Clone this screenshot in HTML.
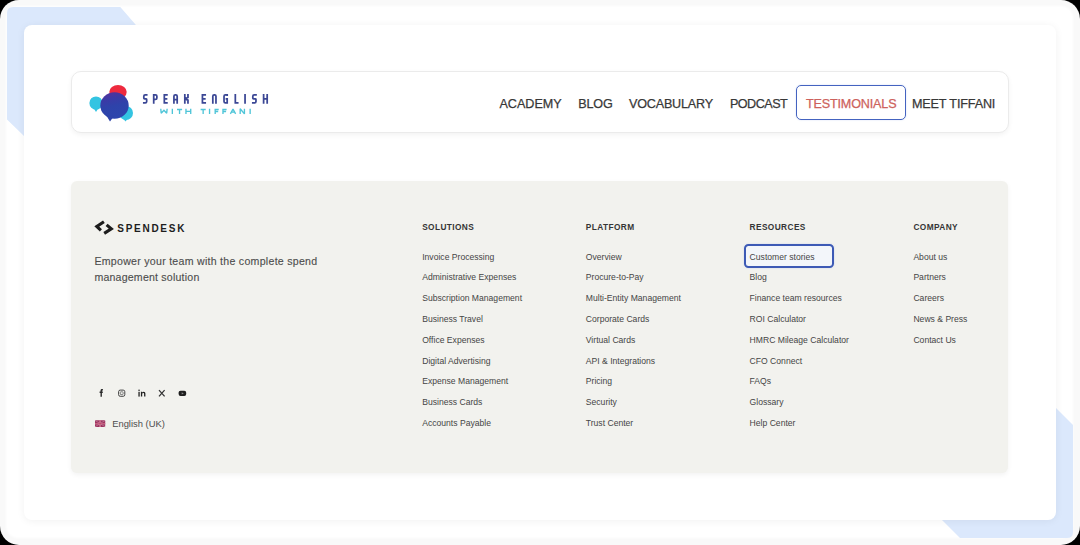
<!DOCTYPE html>
<html><head><meta charset="utf-8">
<style>
*{margin:0;padding:0;box-sizing:border-box}
html,body{width:1080px;height:545px;background:#000;overflow:hidden}
body{position:relative;font-family:"Liberation Sans",sans-serif}
.frame{position:absolute;left:0;top:0;width:1080px;height:545px;border-radius:19px;background:#f9f9f9;overflow:hidden}
.inner{position:absolute;left:6px;top:6px;width:1067px;height:532px;border-radius:12px;background:#fff;filter:blur(1px)}
.abs{position:absolute}
svg.deco{position:absolute;left:0;top:0}
.card{position:absolute;left:24px;top:25px;width:1032px;height:495px;border-radius:8px;background:#fff;box-shadow:0 1px 9px rgba(0,0,0,.06)}
.nav{position:absolute;left:71px;top:71.2px;width:938px;height:61.8px;border-radius:10px;background:#fff;border:1px solid #ebebeb;box-shadow:0 2px 5px rgba(0,0,0,.05)}
.tbox{position:absolute;left:796px;top:85.4px;width:110.2px;height:34.4px;border:1.7px solid #4463c0;border-radius:5px;box-shadow:0 0 1.5px rgba(90,130,220,.35)}
.cbox{position:absolute;left:744.4px;top:244.4px;width:89.6px;height:23.7px;border:2px solid #3d5ab5;border-radius:4.5px;background:#f3f6fa;box-shadow:0 0 1.5px rgba(90,130,220,.35)}
.foot{position:absolute;left:71px;top:180.5px;width:937px;height:292.7px;border-radius:6px;background:#f2f2ee;box-shadow:0 2px 5px rgba(0,0,0,.05)}
.t{position:absolute;white-space:nowrap}
</style></head><body>
<div class="frame">
  <div class="inner"></div>
  <svg class="deco" width="1080" height="545">
    <path d="M7 13 Q7 7 13 7 L120.3 7 L136.8 26 L136.8 40 L40 40 L40 136 L24 136 L7 119.5 Z" fill="#dbe8fc"/>
    <path d="M1073 532 Q1073 538 1067 538 L960 538 L942 520 L1040 520 L1040 408 L1056 408 L1073 425 Z" fill="#dbe8fc"/>
  </svg>
  <div class="card"></div>
  <div class="nav"></div>
  <div class="tbox"></div>
  <div class="foot"></div>
  <div class="cbox"></div>
<svg class="abs" style="left:80px;top:76px" width="60" height="52" viewBox="80 76 60 52">
<defs><linearGradient id="mbg" x1="0" y1="0" x2="0.25" y2="1"><stop offset="0" stop-color="#5b2f98"/><stop offset=".32" stop-color="#3b3aa6"/><stop offset=".6" stop-color="#2e43aa"/><stop offset="1" stop-color="#2d45ad"/></linearGradient></defs>
<ellipse cx="118" cy="92" rx="8.7" ry="7" fill="#ee2a3e"/>
<circle cx="96" cy="103" r="6.6" fill="#33c4e2"/>
<path d="M93.5 108 L96 112 L98.5 108 Z" fill="#33c4e2"/>
<circle cx="126" cy="113" r="7" fill="#33c4e2"/>
<path d="M122 117 L125.5 121.5 L129 117 Z" fill="#33c4e2"/>
<ellipse cx="114.5" cy="105.5" rx="14.2" ry="13.2" fill="url(#mbg)"/>
<path d="M106 115 L110 121.5 L114 116 Z" fill="#2e43aa"/>
</svg>
<svg class="abs" style="left:0;top:0" width="300" height="130" viewBox="0 0 300 130">
<path d="M147.55 94.88 L145.22 94.88 Q143.82 94.88 143.82 96.28 L143.82 98.30 Q143.82 98.90 144.62 98.90 L145.88 98.90 Q146.67 98.90 146.67 99.50 L146.67 101.53 Q146.67 102.92 145.27 102.92 L142.95 102.92 M153.72 103.80 L153.72 94.88 L155.47 94.88 Q156.88 94.88 156.88 96.28 L156.88 97.99 Q156.88 99.39 155.47 99.39 L153.72 99.39 M167.75 94.88 L164.32 94.88 L164.32 102.92 L167.75 102.92 M164.32 98.90 L167.35 98.90 M173.93 103.80 L173.93 96.28 Q173.93 94.88 175.33 94.88 L175.78 94.88 Q177.18 94.88 177.18 96.28 L177.18 103.80 M173.93 99.68 L177.18 99.68 M184.82 94.00 L184.82 103.80 M187.97 94.00 L187.97 97.43 L184.82 98.90 L187.97 100.08 L187.97 103.80 M206.05 94.88 L202.43 94.88 L202.43 102.92 L206.05 102.92 M202.43 98.90 L205.65 98.90 M212.82 103.80 L212.82 96.28 Q212.82 94.88 214.22 94.88 L214.57 94.88 Q215.97 94.88 215.97 96.28 L215.97 103.80 M227.18 96.08 L227.18 94.88 L225.43 94.88 Q224.03 94.88 224.03 96.28 L224.03 101.53 Q224.03 102.92 225.43 102.92 L227.18 102.92 L227.18 98.90 L225.60 98.90 M235.32 94.00 L235.32 102.92 L238.55 102.92 M245.05 94.00 L245.05 103.80 M256.85 94.88 L254.22 94.88 Q252.82 94.88 252.82 96.28 L252.82 98.30 Q252.82 98.90 253.62 98.90 L255.17 98.90 Q255.97 98.90 255.97 99.50 L255.97 101.53 Q255.97 102.92 254.57 102.92 L251.95 102.92 M263.62 94.00 L263.62 103.80 M267.18 94.00 L267.18 103.80 M263.62 98.90 L267.18 98.90" fill="none" stroke="#3b4795" stroke-width="1.75" stroke-miterlimit="2" stroke-linejoin="miter" stroke-linecap="butt"/>
<path d="M160.78 108.80 L161.17 113.22 L163.95 110.33 L166.72 113.22 L167.12 108.80 M172.35 108.80 L172.35 113.90 M177.00 109.47 L182.10 109.47 M179.55 108.80 L179.55 113.90 M185.97 108.80 L185.97 113.90 M190.72 108.80 L190.72 113.90 M185.97 111.35 L190.72 111.35 M200.60 109.47 L205.70 109.47 M203.15 108.80 L203.15 113.90 M209.55 108.80 L209.55 113.90 M218.70 109.47 L215.18 109.47 L215.18 113.90 M215.18 111.45 L218.20 111.45 M226.60 109.47 L222.97 109.47 L222.97 113.90 M222.97 111.45 L226.10 111.45 M230.40 113.90 L233.00 109.00 L235.60 113.90 M231.60 112.17 L234.40 112.17 M240.18 113.90 L240.18 108.80 L244.43 113.90 L244.43 108.80 M250.15 108.80 L250.15 113.90" fill="none" stroke="#4fc5d8" stroke-width="1.35" stroke-miterlimit="2" stroke-linejoin="miter" stroke-linecap="butt"/>
</svg>

<svg class="abs" style="left:90px;top:216px" width="28" height="22" viewBox="90 216 28 22">
<polyline points="103.9,221.7 96.8,226.5 100.9,230.3" fill="none" stroke="#1d1d1d" stroke-width="3.1" stroke-linejoin="miter"/>
<polyline points="106.6,224.9 111.3,228.9 104.2,233.4" fill="none" stroke="#1d1d1d" stroke-width="3.1" stroke-linejoin="miter"/>
</svg>
<svg class="abs" style="left:92px;top:384px" width="100" height="18" viewBox="92 384 100 18">
<path d="M100.5 396.8 V393 H99.6 V391.6 H100.5 V390.7 C100.5 389.6 101 389.1 102 389.1 H102.9 V390.4 H102.4 C102 390.4 101.9 390.6 101.9 391 V391.6 H102.9 L102.7 393 H101.9 V396.8 Z" fill="#2a2a2a"/>
<rect x="118.6" y="390.1" width="6.2" height="6.2" rx="1.6" fill="none" stroke="#444" stroke-width="1"/>
<rect x="120.3" y="391.8" width="2.8" height="2.8" rx=".6" fill="none" stroke="#555" stroke-width=".7"/>
<rect x="138.4" y="391.8" width="1.3" height="4.8" fill="#222"/><circle cx="139.05" cy="390.3" r=".8" fill="#222"/>
<path d="M140.9 391.8 H142.1 V392.5 C142.5 392 143 391.7 143.7 391.7 C144.9 391.7 145.4 392.4 145.4 393.7 V396.6 H144.1 V394 C144.1 393.3 143.9 392.9 143.4 392.9 C142.7 392.9 142.2 393.4 142.2 394.2 V396.6 H140.9 Z" fill="#222"/>
<path d="M159 390.2 L164.6 396.4 M164.6 390.2 L159 396.4" stroke="#333" stroke-width="1.25"/>
<rect x="178.6" y="390.8" width="7.6" height="5.2" rx="1.9" fill="#1e1e1e"/>
<path d="M181.7 392.2 L183.8 393.4 L181.7 394.6 Z" fill="#888"/>
</svg>
<svg class="abs" style="left:95px;top:420px" width="11" height="8" viewBox="0 0 11 8">
<rect x="0" y="0.2" width="10.2" height="6.8" rx="1" fill="#9e3460"/>
<path d="M0 0.4 L10.2 6.8 M10.2 0.4 L0 6.8" stroke="#c07894" stroke-width=".8"/>
<path d="M5.1 0.2 V7 M0 3.6 H10.2" stroke="#dcaabb" stroke-width="1.4"/>
<path d="M5.1 0.2 V7 M0 3.6 H10.2" stroke="#b8345a" stroke-width=".7"/>
</svg>
<div class="t" style="left:499.4px;top:97.06px;font-size:12.6px;line-height:15.75px;font-weight:400;color:#383838;letter-spacing:0px;-webkit-text-stroke:0.25px #383838">ACADEMY</div>
<div class="t" style="left:578.3px;top:97.06px;font-size:12.6px;line-height:15.75px;font-weight:400;color:#383838;letter-spacing:-0.2px;-webkit-text-stroke:0.25px #383838">BLOG</div>
<div class="t" style="left:629.0px;top:97.06px;font-size:12.6px;line-height:15.75px;font-weight:400;color:#383838;letter-spacing:-0.2px;-webkit-text-stroke:0.25px #383838">VOCABULARY</div>
<div class="t" style="left:729.9px;top:97.06px;font-size:12.6px;line-height:15.75px;font-weight:400;color:#383838;letter-spacing:-0.5px;-webkit-text-stroke:0.25px #383838">PODCAST</div>
<div class="t" style="left:805.9px;top:97.06px;font-size:12.6px;line-height:15.75px;font-weight:400;color:#cd625c;letter-spacing:-0.15px;-webkit-text-stroke:0.25px #cd625c">TESTIMONIALS</div>
<div class="t" style="left:912.0px;top:97.06px;font-size:12.6px;line-height:15.75px;font-weight:400;color:#383838;letter-spacing:-0.14px;-webkit-text-stroke:0.25px #383838">MEET TIFFANI</div>
<div class="t" style="left:117.3px;top:222.69px;font-size:10px;line-height:12.5px;font-weight:700;color:#1d1d1d;letter-spacing:1.72px;">SPENDESK</div>
<div class="t" style="left:94.4px;top:255.10px;font-size:10.6px;line-height:13.25px;font-weight:400;color:#4d4d4d;letter-spacing:0.27px;-webkit-text-stroke:0.12px #4d4d4d">Empower your team with the complete spend</div>
<div class="t" style="left:94.4px;top:271.10px;font-size:10.6px;line-height:13.25px;font-weight:400;color:#4d4d4d;letter-spacing:0.2px;-webkit-text-stroke:0.12px #4d4d4d">management solution</div>
<div class="t" style="left:112.2px;top:418.07px;font-size:9.4px;line-height:11.75px;font-weight:400;color:#4d4d4d;letter-spacing:0px;">English (UK)</div>
<div class="t" style="left:422.2px;top:221.53px;font-size:8.3px;line-height:10.38px;font-weight:700;color:#353535;letter-spacing:0.4px;">SOLUTIONS</div>
<div class="t" style="left:422.2px;top:251.65px;font-size:8.6px;line-height:10.75px;font-weight:400;color:#454545;letter-spacing:0px;">Invoice Processing</div>
<div class="t" style="left:422.2px;top:272.43px;font-size:8.6px;line-height:10.75px;font-weight:400;color:#454545;letter-spacing:0px;">Administrative Expenses</div>
<div class="t" style="left:422.2px;top:293.21px;font-size:8.6px;line-height:10.75px;font-weight:400;color:#454545;letter-spacing:0px;">Subscription Management</div>
<div class="t" style="left:422.2px;top:313.99px;font-size:8.6px;line-height:10.75px;font-weight:400;color:#454545;letter-spacing:0px;">Business Travel</div>
<div class="t" style="left:422.2px;top:334.77px;font-size:8.6px;line-height:10.75px;font-weight:400;color:#454545;letter-spacing:0px;">Office Expenses</div>
<div class="t" style="left:422.2px;top:355.55px;font-size:8.6px;line-height:10.75px;font-weight:400;color:#454545;letter-spacing:0px;">Digital Advertising</div>
<div class="t" style="left:422.2px;top:376.33px;font-size:8.6px;line-height:10.75px;font-weight:400;color:#454545;letter-spacing:0px;">Expense Management</div>
<div class="t" style="left:422.2px;top:397.11px;font-size:8.6px;line-height:10.75px;font-weight:400;color:#454545;letter-spacing:0px;">Business Cards</div>
<div class="t" style="left:422.2px;top:417.89px;font-size:8.6px;line-height:10.75px;font-weight:400;color:#454545;letter-spacing:0px;">Accounts Payable</div>
<div class="t" style="left:585.8px;top:221.53px;font-size:8.3px;line-height:10.38px;font-weight:700;color:#353535;letter-spacing:0.4px;">PLATFORM</div>
<div class="t" style="left:585.8px;top:251.65px;font-size:8.6px;line-height:10.75px;font-weight:400;color:#454545;letter-spacing:0px;">Overview</div>
<div class="t" style="left:585.8px;top:272.43px;font-size:8.6px;line-height:10.75px;font-weight:400;color:#454545;letter-spacing:0px;">Procure-to-Pay</div>
<div class="t" style="left:585.8px;top:293.21px;font-size:8.6px;line-height:10.75px;font-weight:400;color:#454545;letter-spacing:0px;">Multi-Entity Management</div>
<div class="t" style="left:585.8px;top:313.99px;font-size:8.6px;line-height:10.75px;font-weight:400;color:#454545;letter-spacing:0px;">Corporate Cards</div>
<div class="t" style="left:585.8px;top:334.77px;font-size:8.6px;line-height:10.75px;font-weight:400;color:#454545;letter-spacing:0px;">Virtual Cards</div>
<div class="t" style="left:585.8px;top:355.55px;font-size:8.6px;line-height:10.75px;font-weight:400;color:#454545;letter-spacing:0px;">API &amp; Integrations</div>
<div class="t" style="left:585.8px;top:376.33px;font-size:8.6px;line-height:10.75px;font-weight:400;color:#454545;letter-spacing:0px;">Pricing</div>
<div class="t" style="left:585.8px;top:397.11px;font-size:8.6px;line-height:10.75px;font-weight:400;color:#454545;letter-spacing:0px;">Security</div>
<div class="t" style="left:585.8px;top:417.89px;font-size:8.6px;line-height:10.75px;font-weight:400;color:#454545;letter-spacing:0px;">Trust Center</div>
<div class="t" style="left:749.6px;top:221.53px;font-size:8.3px;line-height:10.38px;font-weight:700;color:#353535;letter-spacing:0.4px;">RESOURCES</div>
<div class="t" style="left:749.6px;top:251.65px;font-size:8.6px;line-height:10.75px;font-weight:400;color:#454545;letter-spacing:0px;">Customer stories</div>
<div class="t" style="left:749.6px;top:272.43px;font-size:8.6px;line-height:10.75px;font-weight:400;color:#454545;letter-spacing:0px;">Blog</div>
<div class="t" style="left:749.6px;top:293.21px;font-size:8.6px;line-height:10.75px;font-weight:400;color:#454545;letter-spacing:0px;">Finance team resources</div>
<div class="t" style="left:749.6px;top:313.99px;font-size:8.6px;line-height:10.75px;font-weight:400;color:#454545;letter-spacing:0px;">ROI Calculator</div>
<div class="t" style="left:749.6px;top:334.77px;font-size:8.6px;line-height:10.75px;font-weight:400;color:#454545;letter-spacing:0px;">HMRC Mileage Calculator</div>
<div class="t" style="left:749.6px;top:355.55px;font-size:8.6px;line-height:10.75px;font-weight:400;color:#454545;letter-spacing:0px;">CFO Connect</div>
<div class="t" style="left:749.6px;top:376.33px;font-size:8.6px;line-height:10.75px;font-weight:400;color:#454545;letter-spacing:0px;">FAQs</div>
<div class="t" style="left:749.6px;top:397.11px;font-size:8.6px;line-height:10.75px;font-weight:400;color:#454545;letter-spacing:0px;">Glossary</div>
<div class="t" style="left:749.6px;top:417.89px;font-size:8.6px;line-height:10.75px;font-weight:400;color:#454545;letter-spacing:0px;">Help Center</div>
<div class="t" style="left:913.4px;top:221.53px;font-size:8.3px;line-height:10.38px;font-weight:700;color:#353535;letter-spacing:0.4px;">COMPANY</div>
<div class="t" style="left:913.4px;top:251.65px;font-size:8.6px;line-height:10.75px;font-weight:400;color:#454545;letter-spacing:0px;">About us</div>
<div class="t" style="left:913.4px;top:272.43px;font-size:8.6px;line-height:10.75px;font-weight:400;color:#454545;letter-spacing:0px;">Partners</div>
<div class="t" style="left:913.4px;top:293.21px;font-size:8.6px;line-height:10.75px;font-weight:400;color:#454545;letter-spacing:0px;">Careers</div>
<div class="t" style="left:913.4px;top:313.99px;font-size:8.6px;line-height:10.75px;font-weight:400;color:#454545;letter-spacing:0px;">News &amp; Press</div>
<div class="t" style="left:913.4px;top:334.77px;font-size:8.6px;line-height:10.75px;font-weight:400;color:#454545;letter-spacing:0px;">Contact Us</div>

</div>
</body></html>
